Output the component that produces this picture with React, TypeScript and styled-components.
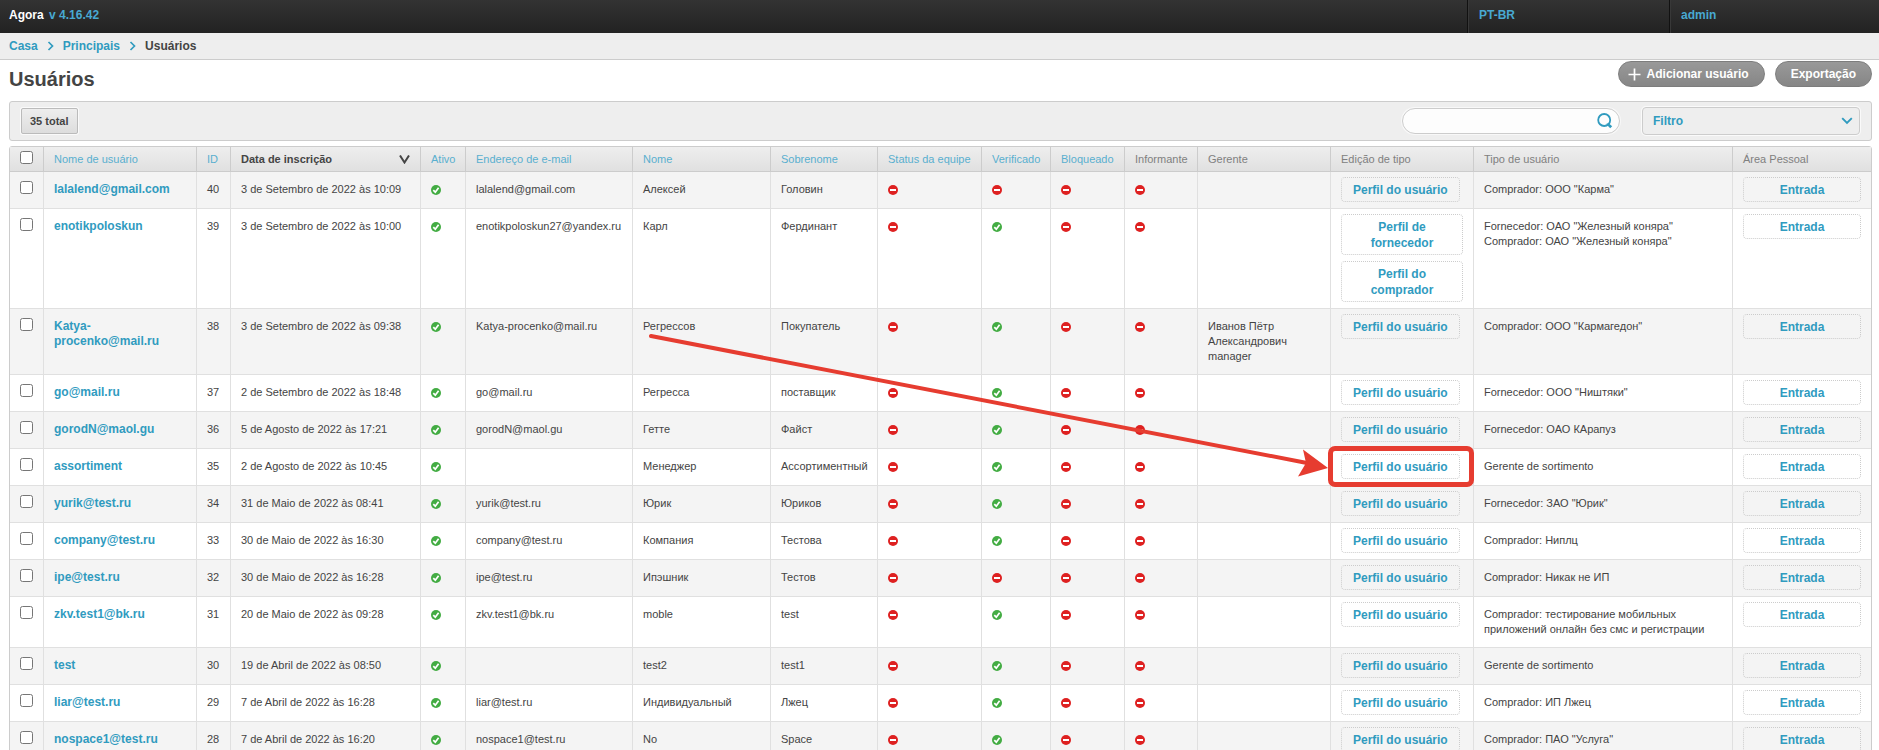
import React from "react";
import styled, { createGlobalStyle, css } from "styled-components";

const GlobalStyle = createGlobalStyle`
  * { box-sizing: border-box; }
  body {
    margin: 0;
    background: #fff;
    color: #444;
    font-family: "Liberation Sans", Arial, sans-serif;
    font-size: 12px;
    line-height: 16px;
  }
  a { color: #309bbf; text-decoration: none; }
  button, input, select { font-family: inherit; }
`;

const TopBar = styled.header`
  display: flex;
  height: 33px;
  background: linear-gradient(#333, #222);
  color: #fff;
  font-weight: bold;
  a { color: #48a9d2; }
`;

const Brand = styled.div`
  flex: 1;
  padding: 7px 9px;
  a { margin-left: 2px; }
`;

const TopItem = styled.div<{ $wide?: boolean }>`
  width: ${(p) => (p.$wide ? 210 : 202)}px;
  padding: 7px 11px;
  border-left: 1px solid #111;
  box-shadow: inset 1px 0 #383838;
`;

const Breadcrumbs = styled.nav`
  display: flex;
  align-items: center;
  gap: 9px;
  height: 27px;
  padding: 0 9px 1px;
  background: #eee;
  border-bottom: 1px solid #ccc;
  font-weight: bold;
`;

const TitleRow = styled.div`
  display: flex;
  justify-content: space-between;
  align-items: flex-start;
  height: 41px;
  padding: 1px 7px 0 9px;
`;

const Title = styled.h1`
  margin: 6px 0 0;
  font-size: 20px;
  line-height: 24px;
`;

const Tools = styled.div`
  display: flex;
  gap: 10px;
`;

const PillButton = styled.button<{ $icon?: boolean }>`
  display: flex;
  align-items: center;
  gap: 6px;
  height: 26px;
  padding: 0 15px 0 ${(p) => (p.$icon ? 9 : 15)}px;
  border: 1px solid #7d7d7d;
  border-radius: 13px;
  background: linear-gradient(#999, #868686);
  color: #fff;
  font-size: 12px;
  font-weight: bold;
`;

const Content = styled.main`
  padding: 0 7px 0 9px;
`;

const FilterBar = styled.section`
  display: flex;
  align-items: center;
  height: 40px;
  margin-bottom: 5px;
  padding: 0 11px;
  border: 1px solid #ccc;
  border-radius: 3px;
  background: #eee;
`;

const Total = styled.button`
  height: 26px;
  padding: 0 8px;
  border: 1px solid #bbb;
  border-radius: 2px;
  background: linear-gradient(#eee, #ddd);
  box-shadow: 0 0 0 1px #fafafa;
  color: #444;
  font-size: 11px;
  font-weight: bold;
`;

const SearchForm = styled.form`
  display: flex;
  align-items: center;
  width: 218px;
  height: 26px;
  margin-left: auto;
  margin-right: 22px;
  padding: 0 6px 0 12px;
  border: 1px solid #ccc;
  border-radius: 13px;
  background: #fdfdfd;
  box-shadow: 0 0 0 1px #f8f8f8;
`;

const SearchInput = styled.input`
  flex: 1;
  min-width: 0;
  border: 0;
  outline: 0;
  background: transparent;
  font-size: 12px;
`;

const SearchButton = styled.button`
  display: flex;
  padding: 0;
  border: 0;
  background: none;
`;

const SelectWrap = styled.div`
  position: relative;
  width: 218px;
  svg {
    position: absolute;
    right: 7px;
    top: 10px;
    pointer-events: none;
  }
`;

const Select = styled.select`
  display: block;
  width: 100%;
  height: 28px;
  padding: 0 10px 1px;
  appearance: none;
  border: 1px solid #ccc;
  border-radius: 4px;
  background: #eee;
  box-shadow: 0 0 0 1px #fafafa;
  color: #309bbf;
  font-size: 12px;
  font-weight: bold;
`;

const Table = styled.table`
  width: 100%;
  table-layout: fixed;
  border: 1px solid #ccc;
  border-radius: 3px 3px 0 0;
  border-spacing: 0;
  font-size: 11px;
  line-height: 15px;
`;

const Th = styled.th<{ $sorted?: boolean }>`
  height: 25px;
  padding: 0 10px;
  border-bottom: 1px solid #ccc;
  background: linear-gradient(#eee, #e0e0e0);
  color: ${(p) => (p.$sorted ? "#444" : "#808080")};
  font-weight: ${(p) => (p.$sorted ? "bold" : "normal")};
  text-align: left;
  white-space: nowrap;
  & + & { border-left: 1px solid #ccc; }
  a { color: #59afcf; }
`;

const SortLabel = styled.span`
  display: flex;
  align-items: center;
  justify-content: space-between;
`;

const Td = styled.td<{ $actions?: boolean }>`
  padding: 10px;
  border-bottom: 1px solid #e0e0e0;
  vertical-align: top;
  & + & { border-left: 1px solid #e0e0e0; }
  ${(p) => p.$actions && css`
    position: relative;
    padding: 5px 10px 6px;
  `}
`;

const Row = styled.tr`
  background: #fff;
  &:nth-child(odd) { background: #f4f4f4; }
`;

const Check = styled.input`
  display: block;
  width: 13px;
  height: 13px;
  margin: -1px 0 2px;
`;

const NameLink = styled.a`
  display: block;
  font-size: 12px;
  font-weight: bold;
`;

const Actions = styled.div<{ $fill?: boolean }>`
  display: flex;
  flex-direction: column;
  align-items: ${(p) => (p.$fill ? "stretch" : "flex-start")};
  gap: 6px;
`;

const ActionLink = styled.a`
  padding: 4px 11px 3px;
  border: 1px dotted #ccc;
  border-radius: 4px;
  font-size: 12px;
  line-height: 16px;
  font-weight: bold;
  text-align: center;
`;

const Status = styled.svg`
  display: block;
  margin-top: 3px;
`;

const Highlight = styled.div`
  position: absolute;
  inset: -3px -1px -2px -3px;
  border: 5px solid #e63c30;
  border-radius: 7px;
  pointer-events: none;
`;

const Arrow = styled.svg`
  position: absolute;
  right: 100%;
  bottom: 50%;
  overflow: visible;
`;

function StatusIcon({ on }: { on: boolean }) {
  return (
    <Status width="10" height="10" viewBox="0 0 10 10" role="img" aria-label={on ? "Sim" : "Não"}>
      <circle cx="5" cy="5" r="5" fill={on ? "#43ac43" : "#de2121"} />
      {on ? (
        <path d="M2.3 5.2 4.3 7.2 7.6 2.8" fill="none" stroke="#fff" strokeWidth="1.7" />
      ) : (
        <rect x="2" y="4" width="6" height="2" fill="#fff" />
      )}
    </Status>
  );
}

function Chevron() {
  return (
    <svg width="7" height="10" viewBox="0 0 7 10" aria-hidden="true">
      <path d="M1.5 1 5.5 5 1.5 9" fill="none" stroke="#309bbf" strokeWidth="1.7" />
    </svg>
  );
}

const WIDTHS = [33, 153, 34, 190, 45, 167, 138, 107, 104, 69, 74, 73, 133, 143, 259, 139];

type User = {
  login: string;
  id: number;
  date: string;
  email?: string;
  first: string;
  last: string;
  verified: boolean;
  manager?: string;
  profiles?: string[];
  types: string[];
  marked?: boolean;
};

const USERS: User[] = [
  { login: "lalalend@gmail.com", id: 40, date: "3 de Setembro de 2022 às 10:09", email: "lalalend@gmail.com", first: "Алексей", last: "Головин", verified: false, types: ['Comprador: ООО "Карма"'] },
  { login: "enotikpoloskun", id: 39, date: "3 de Setembro de 2022 às 10:00", email: "enotikpoloskun27@yandex.ru", first: "Карл", last: "Фердинант", verified: true, profiles: ["Perfil de fornecedor", "Perfil do comprador"], types: ['Fornecedor: ОАО "Железный коняра"', 'Comprador: ОАО "Железный коняра"'] },
  { login: "Katya-procenko@mail.ru", id: 38, date: "3 de Setembro de 2022 às 09:38", email: "Katya-procenko@mail.ru", first: "Регрессов", last: "Покупатель", verified: true, manager: "Иванов Пётр Александрович manager", types: ['Comprador: ООО "Кармагедон"'] },
  { login: "go@mail.ru", id: 37, date: "2 de Setembro de 2022 às 18:48", email: "go@mail.ru", first: "Регресса", last: "поставщик", verified: true, types: ['Fornecedor: ООО "Ништяки"'] },
  { login: "gorodN@maol.gu", id: 36, date: "5 de Agosto de 2022 às 17:21", email: "gorodN@maol.gu", first: "Гетте", last: "Файст", verified: true, types: ["Fornecedor: ОАО КАрапуз"] },
  { login: "assortiment", id: 35, date: "2 de Agosto de 2022 às 10:45", first: "Менеджер", last: "Ассортиментный", verified: true, types: ["Gerente de sortimento"], marked: true },
  { login: "yurik@test.ru", id: 34, date: "31 de Maio de 2022 às 08:41", email: "yurik@test.ru", first: "Юрик", last: "Юриков", verified: true, types: ['Fornecedor: ЗАО "Юрик"'] },
  { login: "company@test.ru", id: 33, date: "30 de Maio de 2022 às 16:30", email: "company@test.ru", first: "Компания", last: "Тестова", verified: true, types: ["Comprador: Ниплц"] },
  { login: "ipe@test.ru", id: 32, date: "30 de Maio de 2022 às 16:28", email: "ipe@test.ru", first: "Ипэшник", last: "Тестов", verified: false, types: ["Comprador: Никак не ИП"] },
  { login: "zkv.test1@bk.ru", id: 31, date: "20 de Maio de 2022 às 09:28", email: "zkv.test1@bk.ru", first: "moble", last: "test", verified: true, types: ["Comprador: тестирование мобильных приложений онлайн без смс и регистрации"] },
  { login: "test", id: 30, date: "19 de Abril de 2022 às 08:50", first: "test2", last: "test1", verified: true, types: ["Gerente de sortimento"] },
  { login: "liar@test.ru", id: 29, date: "7 de Abril de 2022 às 16:28", email: "liar@test.ru", first: "Индивидуальный", last: "Лжец", verified: true, types: ["Comprador: ИП Лжец"] },
  { login: "nospace1@test.ru", id: 28, date: "7 de Abril de 2022 às 16:20", email: "nospace1@test.ru", first: "No", last: "Space", verified: true, types: ['Comprador: ПАО "Услуга"'] },
];

function UserRow({ user }: { user: User }) {
  const profiles = user.profiles ?? ["Perfil do usuário"];
  return (
    <Row>
      <Td><Check type="checkbox" aria-label={`Selecionar ${user.login}`} /></Td>
      <Td><NameLink href="#">{user.login}</NameLink></Td>
      <Td>{user.id}</Td>
      <Td>{user.date}</Td>
      <Td><StatusIcon on /></Td>
      <Td>{user.email}</Td>
      <Td>{user.first}</Td>
      <Td>{user.last}</Td>
      <Td><StatusIcon on={false} /></Td>
      <Td><StatusIcon on={user.verified} /></Td>
      <Td><StatusIcon on={false} /></Td>
      <Td><StatusIcon on={false} /></Td>
      <Td>{user.manager}</Td>
      <Td $actions>
        <Actions $fill={profiles.length > 1}>
          {profiles.map((label) => <ActionLink href="#" key={label}>{label}</ActionLink>)}
        </Actions>
        {user.marked && (
          <Highlight>
            <Arrow width="684" height="132" viewBox="0 0 684 132" aria-hidden="true">
              <path d="M2 1 658 128" stroke="#e63c30" strokeWidth="4" strokeLinecap="round" />
              <path d="M679 133 654 114.500 657 128 649 141.500Z" fill="#e63c30" />
            </Arrow>
          </Highlight>
        )}
      </Td>
      <Td>{user.types.map((type) => <div key={type}>{type}</div>)}</Td>
      <Td $actions>
        <Actions $fill><ActionLink href="#">Entrada</ActionLink></Actions>
      </Td>
    </Row>
  );
}

export default function App() {
  return (
    <>
      <GlobalStyle />
      <TopBar>
        <Brand>Agora <a href="#">v 4.16.42</a></Brand>
        <TopItem><a href="#">PT-BR</a></TopItem>
        <TopItem $wide><a href="#">admin</a></TopItem>
      </TopBar>
      <Breadcrumbs>
        <a href="#">Casa</a>
        <Chevron />
        <a href="#">Principais</a>
        <Chevron />
        <span>Usuários</span>
      </Breadcrumbs>
      <TitleRow>
        <Title>Usuários</Title>
        <Tools>
          <PillButton $icon type="button">
            <svg width="13" height="13" viewBox="0 0 13 13" aria-hidden="true">
              <path d="M6.500 .5V12.500M.5 6.500H12.500" stroke="#fff" strokeWidth="1.700" />
            </svg>
            Adicionar usuário
          </PillButton>
          <PillButton type="button">Exportação</PillButton>
        </Tools>
      </TitleRow>
      <Content>
        <FilterBar>
          <Total type="button">35 total</Total>
          <SearchForm>
            <SearchInput type="text" aria-label="Pesquisar" />
            <SearchButton type="button" aria-label="Pesquisar">
              <svg width="16" height="16" viewBox="0 0 16 16" aria-hidden="true">
                <circle cx="7.2" cy="7" r="6" fill="none" stroke="#309bbf" strokeWidth="1.8" />
                <path d="M9.500 10.500H12L15.200 13.200 13.200 15.200 10.500 12.500Z" fill="#309bbf" />
              </svg>
            </SearchButton>
          </SearchForm>
          <SelectWrap>
            <Select aria-label="Filtro"><option>Filtro</option></Select>
            <svg width="12" height="8" viewBox="0 0 12 8" aria-hidden="true">
              <path d="M1.2 1.2 6 6 10.8 1.2" fill="none" stroke="#309bbf" strokeWidth="1.9" />
            </svg>
          </SelectWrap>
        </FilterBar>
        <Table>
          <colgroup>{WIDTHS.map((width, i) => <col key={i} width={width} />)}</colgroup>
          <thead>
            <tr>
              <Th><Check type="checkbox" aria-label="Selecionar todos" /></Th>
              <Th><a href="#">Nome de usuário</a></Th>
              <Th><a href="#">ID</a></Th>
              <Th $sorted>
                <SortLabel>
                  Data de inscrição
                  <svg width="11" height="9" viewBox="0 0 11 9" aria-hidden="true">
                    <path d="M1 .5 5.500 7.500 10 .5" fill="none" stroke="#444" strokeWidth="2" />
                  </svg>
                </SortLabel>
              </Th>
              <Th><a href="#">Ativo</a></Th>
              <Th><a href="#">Endereço de e-mail</a></Th>
              <Th><a href="#">Nome</a></Th>
              <Th><a href="#">Sobrenome</a></Th>
              <Th><a href="#">Status da equipe</a></Th>
              <Th><a href="#">Verificado</a></Th>
              <Th><a href="#">Bloqueado</a></Th>
              <Th>Informante</Th>
              <Th>Gerente</Th>
              <Th>Edição de tipo</Th>
              <Th>Tipo de usuário</Th>
              <Th>Área Pessoal</Th>
            </tr>
          </thead>
          <tbody>
            {USERS.map((user) => <UserRow key={user.id} user={user} />)}
          </tbody>
        </Table>
      </Content>
    </>
  );
}
